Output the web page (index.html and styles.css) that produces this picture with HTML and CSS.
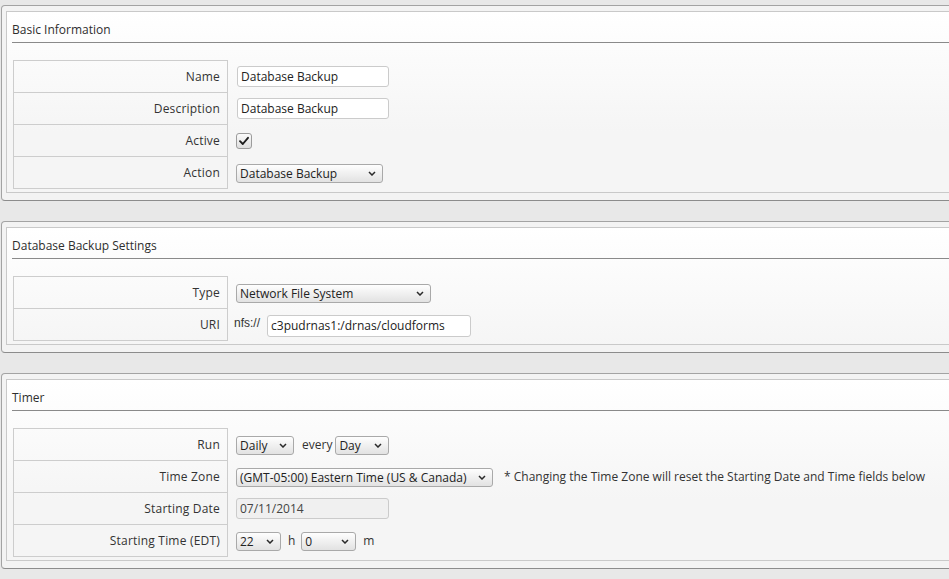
FILE: index.html
```html
<!DOCTYPE html>
<html>
<head>
<meta charset="utf-8">
<link rel="stylesheet" href="styles.css">
</head>
<body>
<div class="page">
  <section class="box">
    <div class="inner">
      <h3 class="title">Basic Information</h3>
      <div class="form">
        <div class="label">Name</div>
        <div class="value"><input class="text" type="text" value="Database Backup"></div>
        <div class="label">Description</div>
        <div class="value"><input class="text" type="text" value="Database Backup"></div>
        <div class="label">Active</div>
        <div class="value"><span class="check"><svg width="14" height="14" viewBox="0 0 14 14"><path d="M3 7.2 L5.8 10 L11 3.8" fill="none" stroke="#1e1e1e" stroke-width="1.9" stroke-linecap="round" stroke-linejoin="round"/></svg></span></div>
        <div class="label">Action</div>
        <div class="value"><span class="sel sel-action"><select><option>Database Backup</option></select><svg class="chev" width="8" height="5" viewBox="0 0 8 5"><path d="M1 1 L4 4 L7 1" fill="none" stroke="#2a2a2a" stroke-width="1.5"/></svg></span></div>
      </div>
    </div>
  </section>

  <section class="box">
    <div class="inner">
      <h3 class="title">Database Backup Settings</h3>
      <div class="form">
        <div class="label">Type</div>
        <div class="value"><span class="sel sel-type"><select><option>Network File System</option></select><svg class="chev" width="8" height="5" viewBox="0 0 8 5"><path d="M1 1 L4 4 L7 1" fill="none" stroke="#2a2a2a" stroke-width="1.5"/></svg></span></div>
        <div class="label">URI</div>
        <div class="value value-uri"><span class="prefix">nfs://</span><input class="text text-uri" type="text" value="c3pudrnas1:/drnas/cloudforms"></div>
      </div>
    </div>
  </section>

  <section class="box">
    <div class="inner">
      <h3 class="title">Timer</h3>
      <div class="form">
        <div class="label">Run</div>
        <div class="value">
          <span class="sel sel-daily"><select><option>Daily</option></select><svg class="chev" width="8" height="5" viewBox="0 0 8 5"><path d="M1 1 L4 4 L7 1" fill="none" stroke="#2a2a2a" stroke-width="1.5"/></svg></span>
          <span class="word word-every">every</span>
          <span class="sel sel-day"><select><option>Day</option></select><svg class="chev" width="8" height="5" viewBox="0 0 8 5"><path d="M1 1 L4 4 L7 1" fill="none" stroke="#2a2a2a" stroke-width="1.5"/></svg></span>
        </div>
        <div class="label">Time Zone</div>
        <div class="value">
          <span class="sel sel-tz"><select><option>(GMT-05:00) Eastern Time (US &amp; Canada)</option></select><svg class="chev" width="8" height="5" viewBox="0 0 8 5"><path d="M1 1 L4 4 L7 1" fill="none" stroke="#2a2a2a" stroke-width="1.5"/></svg></span>
          <span class="note">* Changing the Time Zone will reset the Starting Date and Time fields below</span>
        </div>
        <div class="label">Starting Date</div>
        <div class="value"><input class="text text-date" type="text" value="07/11/2014" readonly></div>
        <div class="label">Starting Time (EDT)</div>
        <div class="value">
          <span class="sel sel-hour"><select><option>22</option></select><svg class="chev" width="8" height="5" viewBox="0 0 8 5"><path d="M1 1 L4 4 L7 1" fill="none" stroke="#2a2a2a" stroke-width="1.5"/></svg></span>
          <span class="word word-h">h</span>
          <span class="sel sel-min"><select><option>0</option></select><svg class="chev" width="8" height="5" viewBox="0 0 8 5"><path d="M1 1 L4 4 L7 1" fill="none" stroke="#2a2a2a" stroke-width="1.5"/></svg></span>
          <span class="word word-m">m</span>
        </div>
      </div>
    </div>
  </section>
</div>
</body>
</html>
```

FILE: styles.css
```css
html, body {
  margin: 0;
  padding: 0;
  overflow: hidden;
}
body {
  background: #e8e8e8;
  font-family: "Open Sans", "Noto Sans", sans-serif;
  font-size: 12px;
  color: #333;
}
.page {
  padding-top: 5px;
}
.box {
  margin: 0 -40px 20px 1px;
  border: 1px solid #a3a3a3;
  border-bottom-color: #8c8c8c;
  border-radius: 4px;
  background: #f3f3f3;
  padding: 5px 4px 7px 4px;
}
.inner {
  border: 1px solid #c9c9c9;
  background: linear-gradient(#ffffff, #f5f5f5 120px);
  padding: 0 5px 4px 5px;
}
.title {
  margin: 0;
  font-size: 12px;
  font-weight: normal;
  color: #2e2e2e;
  line-height: 16px;
  padding: 10px 0 4px 0;
  border-bottom: 1px solid #8a8a8a;
}
.form {
  display: grid;
  grid-template-columns: 215px 1fr;
  margin: 17px 0 0 1px;
}
.label {
  box-sizing: border-box;
  height: 33px;
  margin-bottom: -1px;
  border: 1px solid #cdcdcd;
  display: flex;
  align-items: center;
  justify-content: flex-end;
  padding-right: 7px;
  color: #333;
  letter-spacing: 0.2px;
}
.value {
  height: 32px;
  display: flex;
  align-items: center;
  padding-left: 9px;
}
.text {
  box-sizing: border-box;
  width: 152px;
  height: 21px;
  border: 1px solid #cbcbcb;
  border-radius: 3px;
  background: #fff;
  font-family: "Open Sans", "Noto Sans", sans-serif;
  font-size: 12px;
  color: #222;
  padding: 0 0 0 3px;
  margin: 1px 0 0 0;
  outline: none;
}
.text-date {
  background: #f0f0f0;
  color: #444;
  width: 153px;
  margin-left: -1px;
}
.value-uri {
  padding-left: 6px;
}
.prefix {
  font-family: "Liberation Sans", Arial, sans-serif;
  font-size: 12px;
  color: #333;
  margin-right: 7px;
  margin-top: -3px;
}
.text-uri {
  width: 204px;
  height: 22px;
  margin-top: 3px;
}
.check {
  box-sizing: border-box;
  width: 16px;
  height: 16px;
  margin: 1px 0 0 -1px;
  border: 1px solid #9c9c9c;
  border-radius: 3px;
  background: linear-gradient(#fbfbfb, #dedede);
  display: flex;
  align-items: center;
  justify-content: center;
}
.sel {
  position: relative;
  display: inline-block;
  height: 19px;
  margin: 2px 0 0 -1px;
}
.sel select {
  -webkit-appearance: none;
  appearance: none;
  box-sizing: border-box;
  width: 100%;
  height: 19px;
  border: 1px solid #a9a9a9;
  border-radius: 3px;
  background: linear-gradient(#fefefe, #e2e2e2);
  font-family: "Open Sans", "Noto Sans", sans-serif;
  font-size: 12px;
  color: #222;
  padding: 0 0 0 3px;
  margin: 0;
  outline: none;
  line-height: 17px;
}
.sel .chev {
  position: absolute;
  right: 7px;
  top: 7px;
  pointer-events: none;
}
.sel-action { width: 147px; }
.sel-type { width: 195px; }
.sel-daily { width: 58px; }
.sel-day { width: 54px; }
.sel-tz { width: 257px; }
.sel-hour { width: 45px; }
.sel-min { width: 55px; }
.word {
  color: #333;
}
.word-every {
  margin: 0 4px 0 8px;
}
.word-h {
  margin: 0 7px 0 7px;
}
.word-m {
  margin-left: 7px;
}
.note {
  margin-left: 11px;
  color: #333;
}
```
